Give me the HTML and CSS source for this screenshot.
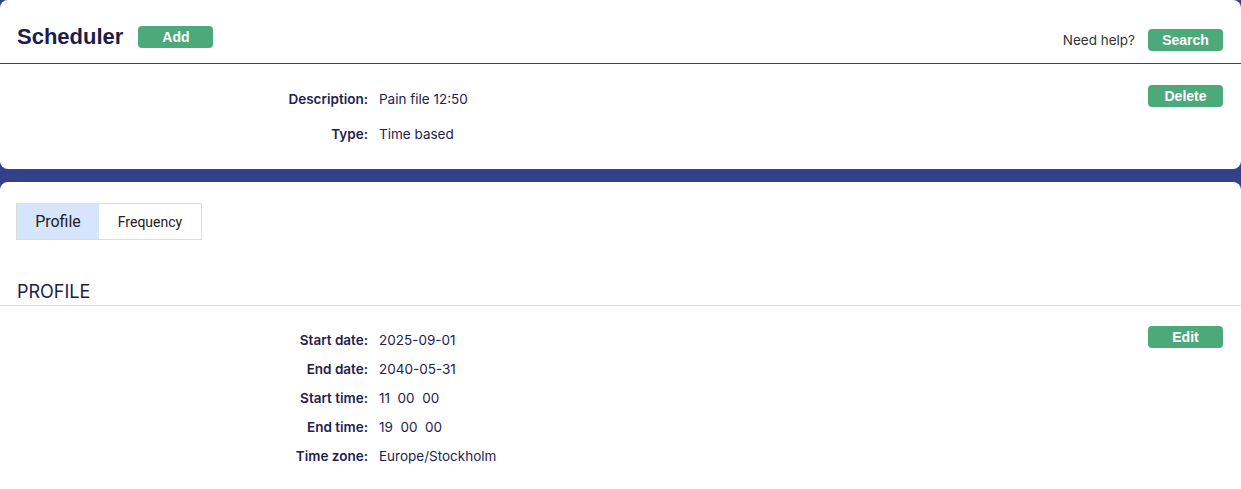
FILE: index.html
```html
<!DOCTYPE html>
<html lang="en">
  <head>
    <meta charset="UTF-8" />
    <title>Scheduler</title>
    <link rel="stylesheet" href="styles.css">
  </head>
  <body>
    <div class="card card-top">
      <div class="header">
        <div class="header-left">
          <h1>Scheduler</h1>
          <button class="button-green">Add</button>
        </div>
        <div class="header-right">
          <span class="help">Need help?</span>
          <button class="button-green">Search</button>
        </div>
      </div>

      <div class="details">
        <div class="fields fields-wide">
          <span class="label">Description:</span><span class="value">Pain file 12:50</span>
          <span class="label">Type:</span><span class="value">Time based</span>
        </div>
        <div class="actions">
          <button class="button-green">Delete</button>
        </div>
      </div>
    </div>

    <div class="card card-bottom">
      <div class="tabs">
        <div class="tab tab-active">Profile</div>
        <div class="tab">Frequency</div>
      </div>

      <h2 class="section-title">PROFILE</h2>

      <div class="details details-profile">
        <div class="fields">
          <span class="label">Start date:</span><span class="value">2025-09-01</span>
          <span class="label">End date:</span><span class="value">2040-05-31</span>
          <span class="label">Start time:</span><span class="value">11&nbsp;&nbsp;00&nbsp;&nbsp;00</span>
          <span class="label">End time:</span><span class="value">19&nbsp;&nbsp;00&nbsp;&nbsp;00</span>
          <span class="label">Time zone:</span><span class="value">Europe/Stockholm</span>
        </div>
        <div class="actions">
          <button class="button-green">Edit</button>
        </div>
      </div>
    </div>
  </body>
</html>
```

FILE: styles.css
```css
body {
  margin: 0;
  background: #35408a;
  font-family: Inter, "Liberation Sans", sans-serif;
  color: #1e2250;
}

.card {
  background: #ffffff;
  border-radius: 8px;
}

.card-top {
  height: 169px;
  margin-bottom: 13px;
}

.card-bottom {
  padding: 21px 0 23px 0;
  border-radius: 8px 8px 0 0;
}

.header {
  display: flex;
  justify-content: space-between;
  height: 39px;
  padding: 24px 18px 0 17px;
  border-bottom: 1px solid #35408a;
}

.header-left {
  display: flex;
  align-items: center;
  align-self: flex-start;
  gap: 15px;
}

.header-right {
  display: flex;
  align-items: center;
  align-self: flex-start;
  gap: 13px;
  margin-top: 5px;
}

h1 {
  margin: 0;
  font-family: "Liberation Sans", Arial, sans-serif;
  font-size: 22px;
  line-height: 26px;
  font-weight: bold;
  color: #1a1e4a;
}

.help {
  font-size: 13.5px;
  color: #333333;
}

.button-green {
  width: 75px;
  height: 22px;
  padding: 0;
  border: none;
  border-radius: 4px;
  background-color: #4caa7a;
  color: #ffffff;
  font-family: "Liberation Sans", Arial, sans-serif;
  font-size: 14px;
  font-weight: bold;
  cursor: pointer;
}

.details {
  display: flex;
  justify-content: space-between;
  padding-right: 18px;
}

.fields {
  display: grid;
  grid-template-columns: 368px auto;
  column-gap: 11px;
  row-gap: 9px;
  padding-top: 24px;
  font-size: 13.5px;
  line-height: 20px;
}

.fields-wide {
  row-gap: 15px;
  padding-top: 25px;
}

.label {
  text-align: right;
  font-weight: 600;
}

.actions {
  padding-top: 21px;
}

.details-profile .actions {
  padding-top: 20px;
}

.tabs {
  display: flex;
  width: max-content;
  margin-left: 16px;
  border: 1px solid #dddddd;
  font-family: Roboto, sans-serif;
  color: #222222;
}

.tab {
  display: flex;
  align-items: center;
  justify-content: center;
  height: 35px;
  width: 102px;
  font-size: 14px;
}

.tab-active {
  width: 82px;
  background: #d6e4fc;
  font-size: 16px;
}

.section-title {
  margin: 41px 0 0 0;
  padding: 0 0 2px 17px;
  border-bottom: 1px solid #dddddd;
  font-size: 18px;
  line-height: 22px;
  font-weight: normal;
  color: #1a1e4a;
}
```
